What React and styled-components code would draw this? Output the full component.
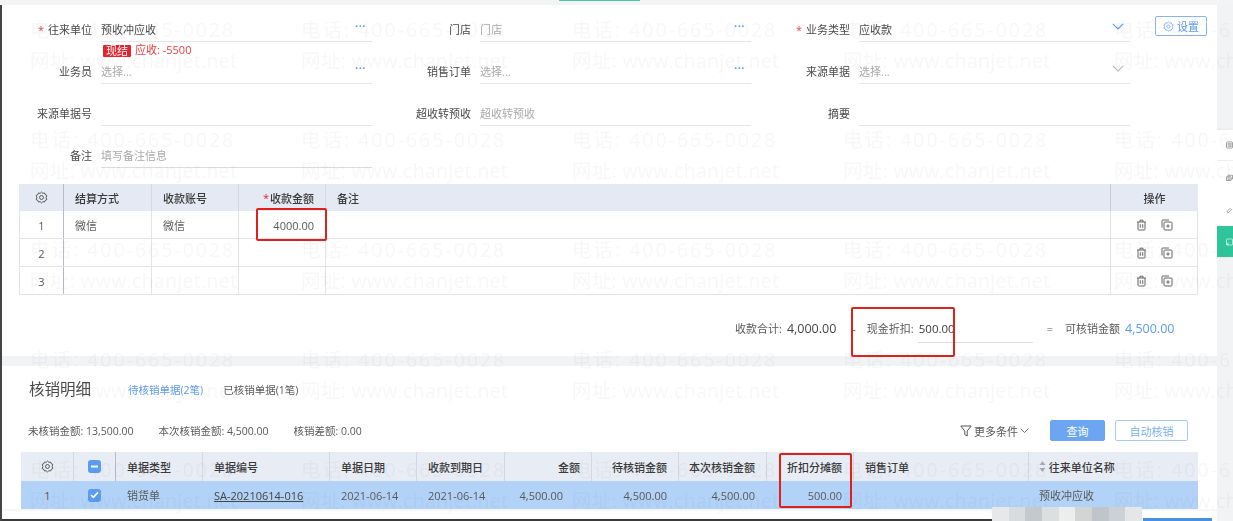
import React from "react";
import styled, { createGlobalStyle } from "styled-components";

const Global = createGlobalStyle`
  html, body { margin: 0; padding: 0; background: #fff; }
  body { font-family: "Open Sans", "Noto Sans CJK SC", sans-serif; font-size: 11px; color: #4a4a4a; }
  * { box-sizing: border-box; }
`;

const Page = styled.div`
  position: relative;
  width: 1233px;
  height: 521px;
  overflow: hidden;
  display: flex;
  flex-direction: column;
  filter: blur(0.5px);
`;
const TopStrip = styled.div`
  height: 5px;
  flex: none;
  background: #f3f4f5;
  padding-left: 559px;
`;
const TopAccent = styled.div`
  width: 81px;
  height: 1px;
  background: #4ec9a5;
`;
const Body = styled.div`
  flex: 1;
  display: flex;
  min-height: 0;
`;
const LeftEdge = styled.div`
  width: 2px;
  flex: none;
  background: #444;
`;
const Content = styled.main`
  width: 1215px;
  flex: none;
  display: flex;
  flex-direction: column;
`;
const Rail = styled.aside`
  flex: 1;
  background: #f2f3f5;
  overflow: hidden;
  padding: 125px 0 0 0;
`;
const SideTabs = styled.div`
  background: #fff;
  display: flex;
  flex-direction: column;
  box-shadow: -1px 0 3px rgba(0, 0, 0, 0.08);
`;
const SideTab = styled.div`
  height: ${(p) => p.$h}px;
  padding-left: 9px;
  display: flex;
  align-items: center;
  color: ${(p) => (p.$active ? "#fff" : "#666")};
  background: ${(p) => (p.$active ? "#2fc59b" : "#fff")};
  border-bottom: ${(p) => (p.$line ? "1px solid #eee" : "none")};
`;

const Form = styled.section`
  display: grid;
  grid-template-columns: repeat(3, 379px);
  grid-template-rows: 37px 42px 42px 42px;
`;
const Field = styled.div`
  display: grid;
  grid-template-columns: 90px 271px;
  column-gap: 9px;
  align-items: start;
  align-self: end;
`;
const Label = styled.label`
  height: 24px;
  line-height: 23px;
  text-align: right;
  color: #4a4a4a;
`;
const Req = styled.span`
  color: #e8413e;
  margin-right: 4px;
`;
const InputBox = styled.div`
  height: 24px;
  line-height: 22px;
  border-bottom: 1px solid ${(p) => (p.$dark ? "#ddd" : "#e6e6e6")};
  color: ${(p) => (p.$ph ? "#aaa" : "#4a4a4a")};
  display: flex;
  justify-content: space-between;
  align-items: center;
  padding-right: 6px;
`;
const Dots = styled.span`
  color: #5b9bf0;
  font-size: 11px;
  font-weight: 700;
  letter-spacing: 0.5px;
  line-height: 10px;
  padding-bottom: 8px;
`;
const ArrowSlot = styled.span`
  display: flex;
  padding-bottom: 6px;
`;
const Hint = styled.div`
  height: 0;
  display: flex;
  gap: 4px;
  padding-left: 2px;
  grid-column: 2;
`;
const Tag = styled.span`
  background: #e8222b;
  color: #fff;
  height: 12px;
  line-height: 12px;
  padding: 0 3px;
  margin-top: 3px;
  font-size: 11px;
  border-radius: 1px;
`;
const HintText = styled.span`
  color: #ef3b3b;
  height: 13px;
  line-height: 13px;
  margin-top: 1px;
`;
const SetButton = styled.button`
  width: 52px;
  height: 20px;
  padding: 0;
  background: #fff;
  border: 1px solid #86b5f0;
  border-radius: 2px;
  color: #5b9bf0;
  font: inherit;
  display: inline-flex;
  align-items: center;
  justify-content: center;
  gap: 3px;
`;
const FormHead = styled.div`
  display: flex;
  align-items: flex-start;
`;
const SetSlot = styled.div`
  width: 0;
  height: 0;
  overflow: visible;
  margin-left: 25px;
  margin-top: 11px;
`;

const Table = styled.div`
  margin-left: ${(p) => p.$left}px;
  margin-top: ${(p) => p.$top}px;
  width: ${(p) => p.$width}px;
  display: flex;
  flex-direction: column;
`;
const Row = styled.div`
  display: grid;
  grid-template-columns: ${(p) => p.$cols};
  height: ${(p) => p.$h}px;
  background: ${(p) => p.$bg || "transparent"};
  border-bottom: ${(p) => (p.$plain ? "none" : "1px solid #e4e4e4")};
`;
const Cell = styled.div`
  display: flex;
  align-items: center;
  justify-content: ${(p) => (p.$align === "right" ? "flex-end" : p.$align === "center" ? "center" : "flex-start")};
  padding: ${(p) => p.$pt ?? 0}px ${(p) => p.$pr ?? 11}px 0 ${(p) => p.$pl ?? 11}px;
  border-left: 1px solid ${(p) => p.$line || "#e4e4e4"};
  border-right: ${(p) => (p.$end ? "1px solid #e4e4e4" : "none")};
  font-weight: ${(p) => (p.$head ? 500 : 400)};
  color: ${(p) => (p.$head ? "#3a3a3a" : "#5a5a5a")};
  white-space: nowrap;
  min-width: 0;
`;
const Star = styled.span`
  color: #e8222b;
  margin-right: 1px;
`;
const DocLink = styled.span`
  color: #444;
  text-decoration: underline;
`;
const Ops = styled.div`
  display: flex;
  gap: 14px;
  align-items: center;
  color: #666;
`;
const CheckBox = styled.span`
  width: 13px;
  height: 13px;
  border-radius: 3px;
  background: #5b9bf0;
  color: #fff;
  display: flex;
  align-items: center;
  justify-content: center;
`;

const Summary = styled.section`
  height: 61px;
  flex: none;
  display: flex;
  align-items: flex-start;
  padding: 23px 0 0 733px;
  line-height: 22px;
  color: #5a5a5a;
`;
const BigNum = styled.span`
  font-size: 12.5px;
  color: ${(p) => (p.$blue ? "#5b9bf0" : "#444")};
  margin-left: ${(p) => p.$ml}px;
`;
const Plain = styled.span`
  margin-left: ${(p) => p.$ml}px;
`;
const DiscountInput = styled.div`
  width: 115px;
  height: 25px;
  line-height: 22px;
  margin-left: 4px;
  padding-left: 1px;
  border-bottom: 1px solid #ddd;
  color: #3a3a3a;
  font-size: 11.5px;
`;
const Band = styled.div`
  height: 10px;
  flex: none;
  background: #f2f3f5;
`;
const TitleRow = styled.div`
  display: flex;
  align-items: center;
  padding: 12px 0 0 27px;
  height: 34px;
  flex: none;
`;
const Title = styled.h2`
  margin: 0 37px 0 0;
  font-size: 15.5px;
  font-weight: 400;
  color: #4a4a4a;
  line-height: 22px;
`;
const TabItem = styled.span`
  color: ${(p) => (p.$active ? "#5b9bf0" : "#5a5a5a")};
  margin-right: 20px;
  font-size: 10.5px;
`;
const StatsRow = styled.div`
  display: flex;
  align-items: center;
  height: 21px;
  margin-top: 20px;
  padding-left: 26px;
  flex: none;
`;
const Stat = styled.span`
  margin-right: 25px;
  color: #5a5a5a;
  font-size: 10.5px;
`;
const Controls = styled.div`
  margin-left: auto;
  display: flex;
  align-items: center;
  padding-right: 29px;
`;
const MoreFilter = styled.span`
  display: inline-flex;
  align-items: center;
  gap: 2px;
  color: #5a5a5a;
  margin-right: 21px;
`;
const Btn = styled.button`
  height: 21px;
  width: ${(p) => p.$w}px;
  margin-left: ${(p) => p.$ml || 0}px;
  padding: 0;
  font: inherit;
  border-radius: 2px;
  border: 1px solid ${(p) => (p.$primary ? "#6ca6f2" : "#a9c9f3")};
  background: ${(p) => (p.$primary ? "#6ca6f2" : "#fff")};
  color: ${(p) => (p.$primary ? "#fff" : "#7fb0ef")};
`;
const Foot = styled.footer`
  flex: none;
  height: 12px;
  display: flex;
  align-items: flex-end;
  box-shadow: inset 0 2px 2px rgba(0,0,0,0.04);
`;
const FootLine = styled.div`
  width: 990px;
  height: 2px;
  background: #3a3a3a;
`;
const FootBlue = styled.div`
  width: 69px;
  height: 3px;
  margin-left: 151px;
  background: #4a90e2;
`;
const Mosaic = styled.div`
  position: absolute;
  left: 992px;
  top: 507px;
  width: 150px;
  height: 14px;
  display: flex;
`;
const MosaicBlock = styled.div`
  flex: 1;
  background: ${(p) => p.$c};
`;

const Mark = styled.div`
  position: absolute;
  left: ${(p) => p.$x}px;
  top: ${(p) => p.$y}px;
  width: ${(p) => p.$w}px;
  height: ${(p) => p.$h}px;
  border: 2px solid #e0201b;
  border-radius: 2px;
  pointer-events: none;
`;
const Watermark = styled.div`
  position: absolute;
  left: 30px;
  top: 14px;
  width: 1400px;
  display: grid;
  grid-template-columns: repeat(5, 271px);
  grid-auto-rows: 110px;
  pointer-events: none;
`;
const WaterTile = styled.div`
  font-size: 19.5px;
  line-height: 31px;
  color: rgba(90, 90, 110, 0.05);
  white-space: nowrap;
`;
const WaterLine = styled.div`
  height: 31px;
  letter-spacing: ${(p) => p.$spacing}px;
`;

const Gear = ({ s = 13 }) => (
  <svg width={s} height={s} viewBox="0 0 16 16" fill="none" stroke="currentColor" strokeWidth="1">
    <path d="M8 1.300 9.600 2.800 11.800 2.500 12.500 4.400 14.500 5.400 13.700 8 14.500 10.600 12.500 11.600 11.800 13.500 9.600 13.200 8 14.700 6.400 13.200 4.200 13.500 3.500 11.600 1.500 10.600 2.300 8 1.500 5.400 3.500 4.400 4.200 2.500 6.400 2.800z" strokeLinejoin="round" />
    <circle cx="8" cy="8" r="2.400" />
  </svg>
);
const Trash = () => (
  <svg width="11" height="12" viewBox="0 0 11 12" fill="none" stroke="currentColor" strokeWidth="1">
    <path d="M1 3h9M4 3V1.200h3V3M2 3v7.200c0 .5.3.8.8.8h5.400c.5 0 .8-.3.8-.8V3M4.300 5.200v3.600M6.700 5.200v3.600" />
  </svg>
);
const CopyAdd = () => (
  <svg width="12" height="12" viewBox="0 0 12 12" fill="none" stroke="currentColor" strokeWidth="1">
    <path d="M1 8.500V1.500c0-.3.2-.5.5-.5h6.500" />
    <rect x="3" y="3" width="8" height="8" rx="1" />
    <path d="M7 5.300v3.400M5.300 7h3.400" />
  </svg>
);
const Chevron = ({ c = "currentColor", w = 12 }) => (
  <svg width={w} height={w * 0.6} viewBox="0 0 10 6" fill="none" stroke={c} strokeWidth="1">
    <path d="M.7.7 5 5l4.300-4.300" />
  </svg>
);
const Funnel = () => (
  <svg width="12" height="12" viewBox="0 0 12 12" fill="none" stroke="#555" strokeWidth="1">
    <path d="M.8 1h10.400L7.200 6v5L4.800 9.600V6z" />
  </svg>
);
const Sort = () => (
  <svg width="7" height="11" viewBox="0 0 7 11" fill="#aab">
    <path d="M3.500 0 6.500 4h-6zM3.500 11 .5 7h6z" />
  </svg>
);
const Tick = () => (
  <svg width="9" height="8" viewBox="0 0 9 8" fill="none" stroke="#fff" strokeWidth="1.600">
    <path d="M1 4l2.400 2.400L8 1.400" />
  </svg>
);
const Minus = () => (
  <svg width="9" height="3" viewBox="0 0 9 3" fill="#fff">
    <rect width="7" height="2" x="1" y=".5" />
  </svg>
);
const DocIcon = () => (
  <svg width="14" height="14" viewBox="0 0 14 14" fill="none" stroke="currentColor" strokeWidth="1.200">
    <rect x="1" y="1" width="12" height="12" rx="1.500" />
    <path d="M3.500 4.500h8M3.500 7h8M3.500 9.500h8" />
  </svg>
);
const StackIcon = () => (
  <svg width="14" height="14" viewBox="0 0 14 14" fill="none" stroke="currentColor" strokeWidth="1.200">
    <path d="M4 4V1.500h9V9h-3M1 4.500h9V12H1zM3 7h5M3 9.500h5" />
  </svg>
);
const ClipIcon = () => (
  <svg width="14" height="14" viewBox="0 0 14 14" fill="none" stroke="currentColor" strokeWidth="1.200">
    <path d="M9 3 3 9c-.9.9-.9 2 0 2.700s1.900.6 2.700-.2L12 5.200" />
  </svg>
);
const ExitIcon = () => (
  <svg width="14" height="14" viewBox="0 0 14 14" fill="none" stroke="currentColor" strokeWidth="1.200">
    <rect x="1" y="1" width="12" height="12" rx="1" />
    <path d="M2 12l4-4M2 8.500V12h3.500" />
  </svg>
);

const COLS1 = "44px 88px 87px 87px 785px 88px";
const COLS2 = "52px 42px 87px 127px 87px 88px 87px 87px 88px 87px 175px 170px";

const payRows = [
  { n: 1, way: "微信", acct: "微信", amt: "4000.00" },
  { n: 2 },
  { n: 3 },
];

const Field3 = ({ label, req, value, ph, dots, arrow, arrowColor, dark, children }) => (
  <Field>
    <Label>
      {req && <Req>*</Req>}
      {label}
    </Label>
    <InputBox $ph={ph} $dark={dark}>
      <span>{value}</span>
      {dots && <Dots>···</Dots>}
      {arrow && <ArrowSlot><Chevron c={arrowColor} /></ArrowSlot>}
    </InputBox>
    {children}
  </Field>
);

export default function App() {
  return (
    <Page>
      <Global />
      <TopStrip>
        <TopAccent />
      </TopStrip>
      <Body>
        <LeftEdge />
        <Content>
          <Form>
            <Field3 label="往来单位" req value="预收冲应收" dots>
              <Hint>
                <Tag>现结</Tag>
                <HintText>应收: -5500</HintText>
              </Hint>
            </Field3>
            <Field3 label="门店" value="门店" ph dots />
            <FormHead>
              <Field3 label="业务类型" req value="应收款" arrow arrowColor="#5b9bf0" />
              <SetSlot>
                <SetButton>
                  <Gear s={11} />
                  设置
                </SetButton>
              </SetSlot>
            </FormHead>
            <Field3 label="业务员" value="选择..." ph dots />
            <Field3 label="销售订单" value="选择..." ph dots />
            <Field3 label="来源单据" value="选择..." ph arrow arrowColor="#bbb" />
            <Field3 label="来源单据号" />
            <Field3 label="超收转预收" value="超收转预收" ph />
            <Field3 label="摘要" />
            <Field3 label="备注" value="填写备注信息" ph dark />
          </Form>

          <Table $left={17} $width={1179} $top={16}>
            <Row $cols={COLS1} $h={27} $bg="#e5e9f3" $plain>
              <Cell $align="center" $line="transparent" $head><Gear /></Cell>
              <Cell $head $line="#b9bcc6">结算方式</Cell>
              <Cell $head $line="#d5d8e0">收款账号</Cell>
              <Cell $head $align="right" $pr={11} $line="#d5d8e0"><Star>*</Star>收款金额</Cell>
              <Cell $head $line="#d5d8e0">备注</Cell>
              <Cell $head $align="center" $line="#c8cbd4">操作</Cell>
            </Row>
            {payRows.map((r) => (
              <Row key={r.n} $cols={COLS1} $h={28}>
                <Cell $align="center" $pt={1}>{r.n}</Cell>
                <Cell $line="#b9bcc6" $pt={1}>{r.way}</Cell>
                <Cell $pt={1}>{r.acct}</Cell>
                <Cell $align="right" $pt={1}>{r.amt}</Cell>
                <Cell />
                <Cell $align="center" $end $pt={1}>
                  <Ops>
                    <Trash />
                    <CopyAdd />
                  </Ops>
                </Cell>
              </Row>
            ))}
          </Table>

          <Summary>
            <span>收款合计:</span>
            <BigNum $ml={5}>4,000.00</BigNum>
            <Plain $ml={16}>-</Plain>
            <Plain $ml={11}>现金折扣:</Plain>
            <DiscountInput>500.00</DiscountInput>
            <Plain $ml={14}>=</Plain>
            <Plain $ml={12}>可核销金额</Plain>
            <BigNum $ml={5} $blue>4,500.00</BigNum>
          </Summary>
          <Band />

          <TitleRow>
            <Title>核销明细</Title>
            <TabItem $active>待核销单据(2笔)</TabItem>
            <TabItem>已核销单据(1笔)</TabItem>
          </TitleRow>
          <StatsRow>
            <Stat>未核销金额: 13,500.00</Stat>
            <Stat>本次核销金额: 4,500.00</Stat>
            <Stat>核销差额: 0.00</Stat>
            <Controls>
              <MoreFilter>
                <Funnel />
                更多条件
                <Chevron w={9} />
              </MoreFilter>
              <Btn $primary $w={55}>查询</Btn>
              <Btn $w={73} $ml={10}>自动核销</Btn>
            </Controls>
          </StatsRow>

          <Table $left={19} $width={1177} $top={11}>
            <Row $cols={COLS2} $h={29} $bg="#e8ecf4" $plain>
              <Cell $align="center" $line="transparent" $head><Gear /></Cell>
              <Cell $align="center" $pl={0} $pr={0} $line="#d5d8e0"><CheckBox><Minus /></CheckBox></Cell>
              <Cell $head $line="#b9bcc6">单据类型</Cell>
              <Cell $head $line="#d5d8e0">单据编号</Cell>
              <Cell $head $line="#d5d8e0">单据日期</Cell>
              <Cell $head $line="#d5d8e0">收款到期日</Cell>
              <Cell $head $align="right" $line="#d5d8e0">金额</Cell>
              <Cell $head $align="right" $line="#d5d8e0">待核销金额</Cell>
              <Cell $head $align="right" $line="#d5d8e0">本次核销金额</Cell>
              <Cell $head $align="right" $line="#d5d8e0">折扣分摊额</Cell>
              <Cell $head $line="#d5d8e0">销售订单</Cell>
              <Cell $head $line="#d5d8e0" $pl={10}><Sort />&nbsp;往来单位名称</Cell>
            </Row>
            <Row $cols={COLS2} $h={28} $bg="#b2d2f8" $plain>
              <Cell $align="center" $line="transparent">1</Cell>
              <Cell $align="center" $pl={0} $pr={0} $line="transparent"><CheckBox><Tick /></CheckBox></Cell>
              <Cell $line="transparent">销货单</Cell>
              <Cell $line="transparent"><DocLink>SA-20210614-016</DocLink></Cell>
              <Cell $line="transparent">2021-06-14</Cell>
              <Cell $line="transparent">2021-06-14</Cell>
              <Cell $align="right" $line="transparent" $pr={28}>4,500.00</Cell>
              <Cell $align="right" $line="transparent">4,500.00</Cell>
              <Cell $align="right" $line="transparent">4,500.00</Cell>
              <Cell $align="right" $line="transparent">500.00</Cell>
              <Cell $line="transparent" />
              <Cell $line="transparent" $pl={10}>预收冲应收</Cell>
            </Row>
          </Table>

          <Foot>
            <FootLine />
            <FootBlue />
          </Foot>
        </Content>
        <Rail>
          <SideTabs>
            <SideTab $h={31} $line><DocIcon /></SideTab>
            <SideTab $h={33}><StackIcon /></SideTab>
            <SideTab $h={32}><ClipIcon /></SideTab>
            <SideTab $h={31} $active><ExitIcon /></SideTab>
          </SideTabs>
        </Rail>
      </Body>

      <Watermark>
        {Array.from({ length: 25 }, (_, i) => (
          <WaterTile key={i}>
            <WaterLine $spacing={2}>电话:&nbsp;400-665-0028</WaterLine>
            <WaterLine $spacing={0.3}>网址:&nbsp;www.chanjet.net</WaterLine>
          </WaterTile>
        ))}
      </Watermark>

      <Mark $x={256} $y={208} $w={71} $h={33} />
      <Mark $x={851} $y={307} $w={104} $h={50} />
      <Mark $x={779} $y={453} $w={73} $h={55} />
      <Mosaic>
        {["#e6e8ea", "#d9dcdf", "#c4c9cd", "#dcdfe0", "#eceeee", "#d2d5d4", "#bfc5ca", "#ccd1d6", "#e4e6e8"].map((c, i) => (
          <MosaicBlock key={i} $c={c} />
        ))}
      </Mosaic>
    </Page>
  );
}
